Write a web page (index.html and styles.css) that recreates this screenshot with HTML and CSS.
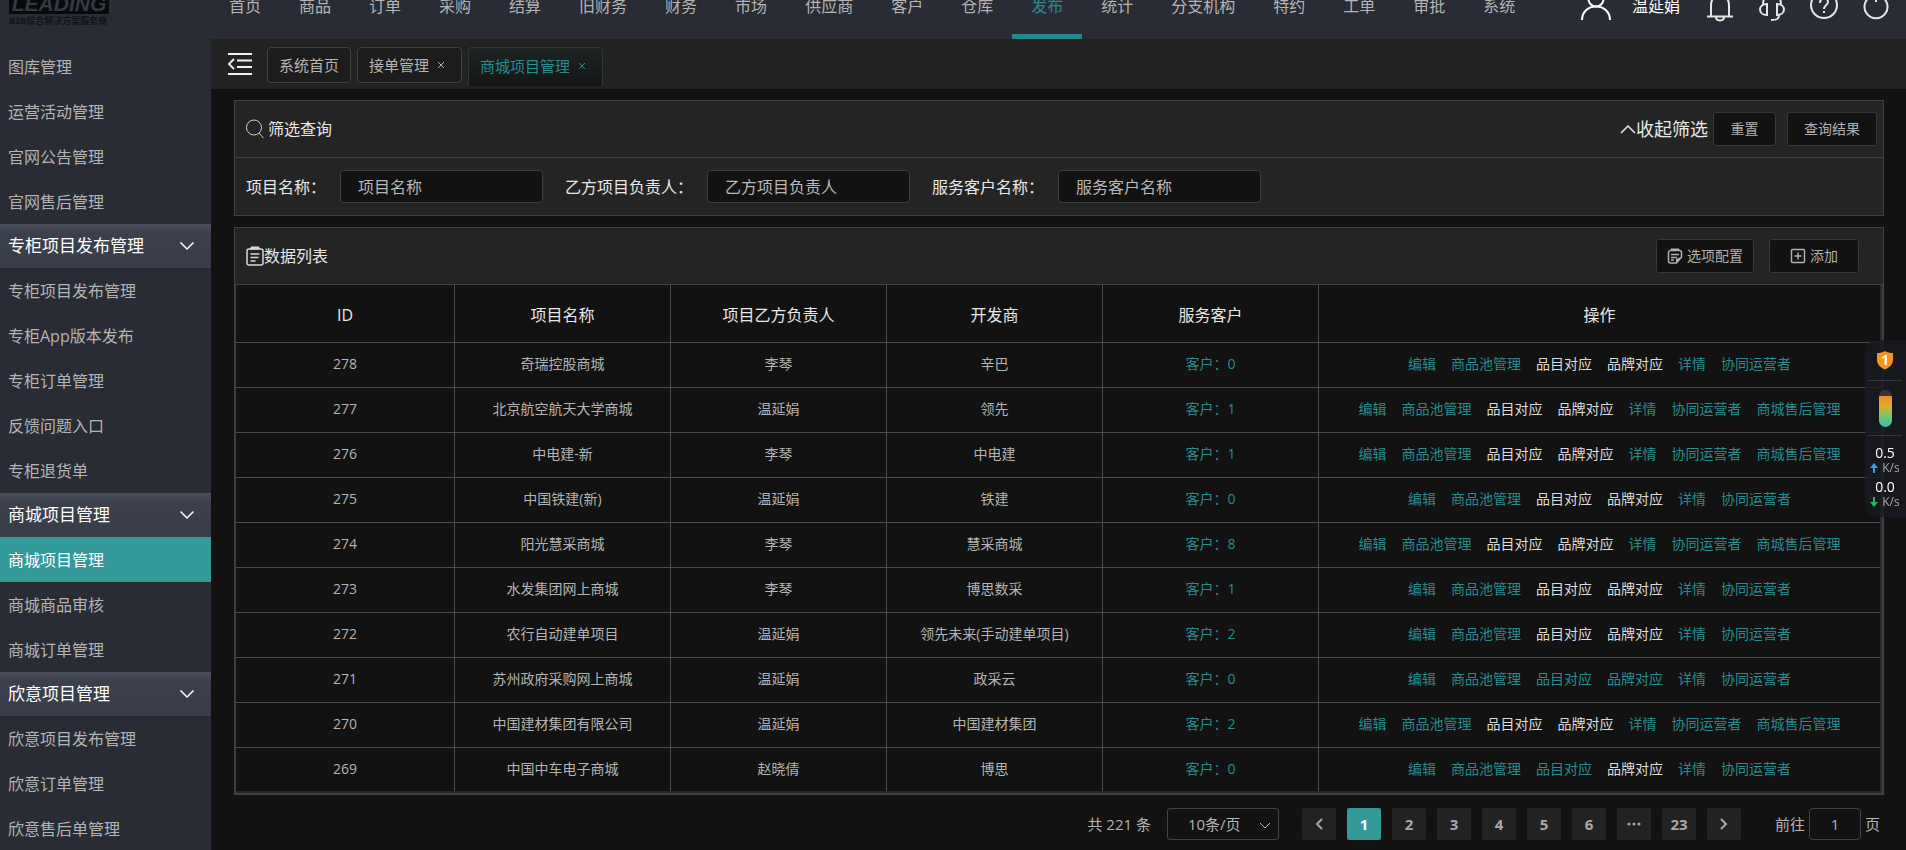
FILE: index.html
```html
<!DOCTYPE html>
<html lang="zh-CN">
<head>
<meta charset="utf-8">
<title>商城项目管理</title>
<link rel="stylesheet" href="styles.css">
</head>
<body>
<header class="topbar">
  <div class="topbar-inner">
    <div class="logo">
      <span class="logo-mark">LEADING</span>
      <span class="logo-sub">B2B综合解决方案服务商</span>
    </div>
    <nav class="topnav">
      <a href="#">首页</a><a href="#">商品</a><a href="#">订单</a><a href="#">采购</a><a href="#">结算</a><a href="#">旧财务</a><a href="#">财务</a><a href="#">市场</a><a href="#">供应商</a><a href="#">客户</a><a href="#">仓库</a><a href="#" class="is-active">发布</a><a href="#">统计</a><a href="#">分支机构</a><a href="#">特约</a><a href="#">工单</a><a href="#">审批</a><a href="#">系统</a>
    </nav>
    <div class="user">
      <svg class="user-avatar" width="32" height="32" viewBox="0 0 32 32"><circle cx="16" cy="9" r="7.500"/><path d="M2 30c0-8 6-13.500 14-13.500s14 5.500 14 13.500"/></svg>
      <span class="user-name">温延娟</span>
      <button class="icon-btn" aria-label="通知"><svg width="28" height="32" viewBox="0 0 28 32"><path d="M14 2v3M5 26V15c0-6 4-10 9-10s9 4 9 10v11M1 26.500h26M10 27c0 4.500 8 4.500 8 0"/></svg></button>
      <button class="icon-btn" aria-label="客服"><svg width="28" height="32" viewBox="0 0 28 32"><path d="M5 15C5 7 9 4 14 4s9 3 9 11M9 14v11c-4 0-7-2-7-5.500S5 14 9 14zM19 14v11c4 0 7-2 7-5.500S23 14 19 14zM21 25c0 4-2 5-8 5"/></svg></button>
      <button class="icon-btn" aria-label="帮助"><svg width="28" height="32" viewBox="0 0 28 32"><circle cx="14" cy="15" r="13"/><path d="M10 13c0-6 8-6 8-1 0 3-4 3-4 7M14 21v2"/></svg></button>
      <button class="icon-btn" aria-label="退出"><svg width="28" height="32" viewBox="0 0 28 32"><path d="M10 6a11.500 11.500 0 1 0 8 0M14 2v10"/></svg></button>
    </div>
  </div>
</header>

<div class="layout">
  <aside class="sidebar">
    <a href="#">图库管理</a>
    <a href="#">运营活动管理</a>
    <a href="#">官网公告管理</a>
    <a href="#">官网售后管理</a>
    <button class="side-group">专柜项目发布管理<svg width="16" height="10" viewBox="0 0 16 10"><path d="M1.500 1.500 8 8l6.500-6.500"/></svg></button>
    <a href="#">专柜项目发布管理</a>
    <a href="#">专柜App版本发布</a>
    <a href="#">专柜订单管理</a>
    <a href="#">反馈问题入口</a>
    <a href="#">专柜退货单</a>
    <button class="side-group">商城项目管理<svg width="16" height="10" viewBox="0 0 16 10"><path d="M1.500 1.500 8 8l6.500-6.500"/></svg></button>
    <a href="#" class="is-active">商城项目管理</a>
    <a href="#">商城商品审核</a>
    <a href="#">商城订单管理</a>
    <button class="side-group">欣意项目管理<svg width="16" height="10" viewBox="0 0 16 10"><path d="M1.500 1.500 8 8l6.500-6.500"/></svg></button>
    <a href="#">欣意项目发布管理</a>
    <a href="#">欣意订单管理</a>
    <a href="#">欣意售后单管理</a>
  </aside>

  <div class="content">
    <div class="tabs">
      <button class="collapse" aria-label="收起菜单"><svg width="24" height="22" viewBox="0 0 24 22"><path d="M0 1h24M9 7.500h15M9 14h15M0 21h24M6 6l-5 5 5 5"/></svg></button>
      <div class="tab">系统首页</div>
      <div class="tab">接单管理<button class="tab-close" aria-label="关闭"><svg width="8" height="8" viewBox="0 0 8 8"><path d="m1 1 6 6M7 1 1 7"/></svg></button></div>
      <div class="tab is-active">商城项目管理<button class="tab-close" aria-label="关闭"><svg width="8" height="8" viewBox="0 0 8 8"><path d="m1 1 6 6M7 1 1 7"/></svg></button></div>
    </div>

    <main class="main">
      <section class="panel">
        <div class="panel-head">
          <svg class="search-icon" width="18" height="20" viewBox="0 0 18 20"><circle cx="8" cy="8.500" r="7.500"/><path d="m13 14 4.500 5"/></svg>
          <h2>筛选查询</h2>
          <div class="filter-actions">
            <button class="fold"><svg width="16" height="10" viewBox="0 0 16 10"><path d="m1 9 7-7 7 7"/></svg>收起筛选</button>
            <button class="btn btn-short">重置</button>
            <button class="btn">查询结果</button>
          </div>
        </div>
        <form class="filters">
          <label for="f-name">项目名称：</label><input id="f-name" type="text" placeholder="项目名称">
          <label for="f-owner">乙方项目负责人：</label><input id="f-owner" type="text" placeholder="乙方项目负责人">
          <label for="f-client">服务客户名称：</label><input id="f-client" type="text" placeholder="服务客户名称">
        </form>
      </section>

      <section class="panel">
        <div class="panel-head">
          <svg class="list-icon" width="18" height="20" viewBox="0 0 18 20"><rect x="1" y="3" width="16" height="16" rx="2"/><path d="M4.500 8h9M4.500 11.500h8M4.500 15h5"/><path class="clip" d="M5 .5h8l1 3H4z"/></svg>
          <h2>数据列表</h2>
          <div class="list-actions">
            <button class="btn"><svg width="16" height="16" viewBox="0 0 16 16"><path d="M9.500 15H3.500a2 2 0 0 1-2-2V4.500a2 2 0 0 1 2-2h9a2 2 0 0 1 2 2V9zM4 6.500h8M4 9.500h6M4 12h3"/><path class="clip" d="M4 .5h8l1 2.500H3zM9 15v-4l5.500-2z"/></svg>选项配置</button>
            <button class="btn"><svg width="16" height="16" viewBox="0 0 16 16"><rect x="1.500" y="1.500" width="13" height="13" rx="1"/><path d="M4.500 8h7M8 4.500v7"/></svg>添加</button>
          </div>
        </div>
        <div class="table-wrap">
        <table class="grid">
          <colgroup><col class="c-id"><col class="c-mid"><col class="c-mid"><col class="c-mid"><col class="c-mid"><col></colgroup>
          <thead><tr><th>ID</th><th>项目名称</th><th>项目乙方负责人</th><th>开发商</th><th>服务客户</th><th>操作</th></tr></thead>
          <tbody>
            <tr><td>278</td><td>奇瑞控股商城</td><td>李琴</td><td>辛巴</td><td><a href="#">客户：0</a></td><td><div class="ops"><a href="#">编辑</a><a href="#">商品池管理</a><a href="#" class="lit">品目对应</a><a href="#" class="lit">品牌对应</a><a href="#">详情</a><a href="#">协同运营者</a></div></td></tr>
            <tr><td>277</td><td>北京航空航天大学商城</td><td>温延娟</td><td>领先</td><td><a href="#">客户：1</a></td><td><div class="ops"><a href="#">编辑</a><a href="#">商品池管理</a><a href="#" class="lit">品目对应</a><a href="#" class="lit">品牌对应</a><a href="#">详情</a><a href="#">协同运营者</a><a href="#">商城售后管理</a></div></td></tr>
            <tr><td>276</td><td>中电建-新</td><td>李琴</td><td>中电建</td><td><a href="#">客户：1</a></td><td><div class="ops"><a href="#">编辑</a><a href="#">商品池管理</a><a href="#" class="lit">品目对应</a><a href="#" class="lit">品牌对应</a><a href="#">详情</a><a href="#">协同运营者</a><a href="#">商城售后管理</a></div></td></tr>
            <tr><td>275</td><td>中国铁建(新)</td><td>温延娟</td><td>铁建</td><td><a href="#">客户：0</a></td><td><div class="ops"><a href="#">编辑</a><a href="#">商品池管理</a><a href="#" class="lit">品目对应</a><a href="#" class="lit">品牌对应</a><a href="#">详情</a><a href="#">协同运营者</a></div></td></tr>
            <tr><td>274</td><td>阳光慧采商城</td><td>李琴</td><td>慧采商城</td><td><a href="#">客户：8</a></td><td><div class="ops"><a href="#">编辑</a><a href="#">商品池管理</a><a href="#" class="lit">品目对应</a><a href="#" class="lit">品牌对应</a><a href="#">详情</a><a href="#">协同运营者</a><a href="#">商城售后管理</a></div></td></tr>
            <tr><td>273</td><td>水发集团网上商城</td><td>李琴</td><td>博思数采</td><td><a href="#">客户：1</a></td><td><div class="ops"><a href="#">编辑</a><a href="#">商品池管理</a><a href="#" class="lit">品目对应</a><a href="#" class="lit">品牌对应</a><a href="#">详情</a><a href="#">协同运营者</a></div></td></tr>
            <tr><td>272</td><td>农行自动建单项目</td><td>温延娟</td><td>领先未来(手动建单项目)</td><td><a href="#">客户：2</a></td><td><div class="ops"><a href="#">编辑</a><a href="#">商品池管理</a><a href="#" class="lit">品目对应</a><a href="#" class="lit">品牌对应</a><a href="#">详情</a><a href="#">协同运营者</a></div></td></tr>
            <tr><td>271</td><td>苏州政府采购网上商城</td><td>温延娟</td><td>政采云</td><td><a href="#">客户：0</a></td><td><div class="ops"><a href="#">编辑</a><a href="#">商品池管理</a><a href="#">品目对应</a><a href="#">品牌对应</a><a href="#">详情</a><a href="#">协同运营者</a></div></td></tr>
            <tr><td>270</td><td>中国建材集团有限公司</td><td>温延娟</td><td>中国建材集团</td><td><a href="#">客户：2</a></td><td><div class="ops"><a href="#">编辑</a><a href="#">商品池管理</a><a href="#" class="lit">品目对应</a><a href="#" class="lit">品牌对应</a><a href="#">详情</a><a href="#">协同运营者</a><a href="#">商城售后管理</a></div></td></tr>
            <tr><td>269</td><td>中国中车电子商城</td><td>赵晓倩</td><td>博思</td><td><a href="#">客户：0</a></td><td><div class="ops"><a href="#">编辑</a><a href="#">商品池管理</a><a href="#">品目对应</a><a href="#" class="lit">品牌对应</a><a href="#">详情</a><a href="#">协同运营者</a></div></td></tr>
          </tbody>
        </table>
        </div>
      </section>

      <div class="pager">
        <span class="pager-total">共 221 条</span>
        <div class="pager-size">
          <select aria-label="每页条数"><option>10条/页</option><option>20条/页</option></select>
          <svg width="12" height="8" viewBox="0 0 12 8"><path d="m1 1 5 5 5-5"/></svg>
        </div>
        <div class="pager-list">
          <button aria-label="上一页"><svg width="8" height="12" viewBox="0 0 8 12"><path d="M7 1 2 6l5 5"/></svg></button>
          <button class="is-active">1</button><button>2</button><button>3</button><button>4</button><button>5</button><button>6</button>
          <button aria-label="更多"><svg class="dots" width="14" height="4" viewBox="0 0 14 4"><circle cx="2" cy="2" r="1.500"/><circle cx="7" cy="2" r="1.500"/><circle cx="12" cy="2" r="1.500"/></svg></button>
          <button>23</button>
          <button aria-label="下一页"><svg width="8" height="12" viewBox="0 0 8 12"><path d="m1 1 5 5-5 5"/></svg></button>
        </div>
        <div class="pager-jump"><label for="jump">前往</label><input id="jump" type="text" value="1"><span>页</span></div>
      </div>
    </main>
  </div>
</div>

<aside class="monitor">
  <div class="monitor-shield">
    <svg width="18" height="20" viewBox="0 0 18 20"><path d="M9 1c2.500 1.500 5 2 8 2v7c0 4.500-3.500 7.500-8 9.500C4.500 17.500 1 14.500 1 10V3c3 0 5.500-.500 8-2z"/></svg>
    <span>1</span>
  </div>
  <div class="monitor-mem"><div class="capsule"></div></div>
  <div class="monitor-net">
    <b>0.5</b>
    <span><svg class="up" width="8" height="10" viewBox="0 0 8 10"><path d="M4 0 8 5H5v5H3V5H0z"/></svg>K/s</span>
    <b>0.0</b>
    <span><svg class="down" width="8" height="10" viewBox="0 0 8 10"><path d="M4 10 8 5H5V0H3v5H0z"/></svg>K/s</span>
  </div>
</aside>
</body>
</html>
```

FILE: styles.css
```css
* { box-sizing: border-box; }

body {
  margin: 0;
  height: 100vh;
  overflow: hidden;
  display: flex;
  flex-direction: column;
  background: #121212;
  color: #b4b4b4;
  font-family: "Open Sans", "Noto Sans CJK SC", sans-serif;
  font-size: 16px;
  line-height: 24px;
}

a { color: inherit; text-decoration: none; }
button, input, select { font: inherit; color: inherit; }
button { margin: 0; padding: 0; border: 0; background: none; cursor: pointer; }
svg { display: block; flex: none; fill: none; stroke: currentColor; }
h2 { margin: 0; font-size: 16px; font-weight: 400; color: #e8e8e8; }

/* top bar */
.topbar { flex: none; height: 39px; overflow: hidden; background: #292c35; }
.topbar-inner { display: flex; height: 67px; margin-top: -28px; }
.logo { width: 210px; padding: 20px 0 0 9px; display: flex; flex-direction: column; flex: none; }
.logo-mark {
  width: 100px; height: 22px;
  background: #08090b; color: #363943;
  font: italic 700 21px/24px "Liberation Sans", sans-serif;
  text-align: center;
  overflow: hidden;
}
.logo-sub { font-size: 9px; line-height: 14px; font-weight: 700; color: #111318; white-space: nowrap; }
.topnav { display: flex; }
.topnav a { display: flex; align-items: center; padding: 5px 19px 0; white-space: nowrap; border-bottom: 5px solid transparent; }
.topnav .is-active { color: #298b8d; border-color: #24898c; }
.user { margin-left: auto; display: flex; align-items: center; gap: 24px; padding-right: 16px; color: #ffffff; }
.user svg { stroke-width: 2; }
.user-name { margin: 0 2px 0 -4px; white-space: nowrap; }
.icon-btn { color: #e6e6e6; }

/* side menu */
.layout { flex: 1; min-height: 0; display: flex; }
.sidebar { flex: none; width: 211px; padding-top: 5px; overflow: hidden; background: #292c35; display: flex; flex-direction: column; }
.sidebar a { flex: none; height: 45px; padding: 0 8px; line-height: 46px; }
.sidebar .is-active { background: #339999; color: #ffffff; }
.side-group {
  flex: none; height: 44px; padding: 0 16px 0 8px;
  display: flex; align-items: center; justify-content: space-between;
  font-size: 17px; color: #ffffff;
  background: linear-gradient(#4c505d 0, #3c404d 9px, #393c49 100%);
}
.side-group svg { stroke-width: 1.5; }

/* tabs */
.content { flex: 1; min-width: 0; display: flex; flex-direction: column; }
.tabs { height: 50px; padding: 8px 17px 0; display: flex; gap: 6px; align-items: flex-start; background: #222222; font-size: 15px; }
.collapse { margin: 6px 9px 0 0; color: #f0f0f0; }
.collapse svg { stroke-width: 2; }
.tab { height: 36px; padding: 0 11px; display: flex; align-items: center; border: 1px solid #404040; border-radius: 4px; background: #1c1c1c; }
.tab.is-active { height: 39px; padding-bottom: 2px; border-color: #2d3836; border-bottom: 0; border-radius: 4px 4px 0 0; background: linear-gradient(#1d2423, #121515); color: #298b8d; }
.tab-close { margin: 0 5px 0 8px; }

/* panels */
.main { padding: 11px 22px 0 23px; display: flex; flex-direction: column; gap: 11px; }
.panel { border: 1px solid #414141; background: #242424; }
.panel-head { height: 57px; padding-left: 11px; display: flex; align-items: center; border-bottom: 1px solid #414141; }
.search-icon { margin-right: 4px; color: #d0d0d0; }
.list-icon { color: #d8d8d8; stroke-width: 1.5; }
.clip { fill: currentColor; stroke: none; }
.filter-actions, .list-actions { margin-left: auto; display: flex; align-items: center; }
.filter-actions { gap: 11px; padding-right: 6px; }
.list-actions { gap: 15px; padding-right: 24px; }
.fold { display: flex; align-items: center; margin-right: -6px; font-size: 18px; color: #e8e8e8; white-space: nowrap; }
.fold svg { stroke-width: 1.5; }
.btn { height: 34px; min-width: 90px; padding: 0 10px; display: flex; align-items: center; justify-content: center; gap: 4px; border: 1px solid #363838; border-radius: 3px; background: #121212; font-size: 14px; color: #b0b0b0; white-space: nowrap; }
.btn svg { stroke-width: 1.5; }
.btn-short { min-width: 63px; }
.filters { height: 57px; padding-left: 11px; display: flex; align-items: center; }
.filters label { margin-right: 14px; color: #e8e8e8; white-space: nowrap; }
.filters input { width: 203px; height: 33px; margin-right: 22px; padding: 0 17px; border: 1px solid #3d3d3d; border-radius: 4px; background: #121212; outline: 0; }
.filters input::placeholder { color: #b8b8b8; opacity: 1; }

/* table */
.table-wrap { padding: 0 2px 2px 0; border: solid #3e3f43; border-width: 0 1px 1px 1px; background: #28292c; }
.grid { width: 100%; table-layout: fixed; border-collapse: separate; border-spacing: 0; background: #121212; }
.c-id { width: 219px; }
.c-mid { width: 216px; }
.grid th, .grid td { padding: 0 0 2px; text-align: center; border: solid #4a4a4c; border-width: 0 1px 1px 0; }
.grid th { height: 58px; padding: 2px 0 0; font-weight: 400; color: #e8e8e8; }
.grid td { height: 45px; font-size: 14px; }
.grid tr > :last-child { border-right: 0; }
.grid tbody tr:last-child td { height: 43px; border-bottom: 0; }
.grid td a { color: #298b8d; white-space: nowrap; }
.grid td a.lit { color: #dcdcdc; }
.ops { display: flex; justify-content: center; gap: 15px; }

/* pagination */
.pager { display: flex; align-items: center; justify-content: flex-end; padding: 2px 4px 0 0; font-size: 15px; }
.pager-total { margin-right: 16px; }
.pager-size { position: relative; margin-right: 23px; }
.pager-size select { display: block; appearance: none; width: 112px; height: 32px; padding: 0 20px; border: 1px solid #424242; border-radius: 3px; background: #121212; }
.pager-size svg { position: absolute; right: 8px; top: 14px; pointer-events: none; }
.pager-list { display: flex; gap: 11px; margin-right: 34px; }
.pager-list button { width: 34px; height: 32px; display: flex; align-items: center; justify-content: center; border-radius: 2px; background: #222222; font-weight: 700; color: #a8a8a8; }
.pager-list .is-active { background: #339999; color: #ffffff; }
.pager-list svg { stroke-width: 2; }
.pager-list .dots { fill: currentColor; stroke: none; }
.pager-jump { display: flex; align-items: center; gap: 4px; }
.pager-jump input { width: 52px; height: 32px; padding: 0; text-align: center; border: 1px solid #424242; border-radius: 4px; background: #121212; }

/* floating system monitor */
.monitor { position: fixed; right: 0; top: 340px; width: 41px; padding-left: 3px; border-radius: 12px 0 0 12px; background: rgba(24, 26, 32, 0.85); color: #ffffff; }
.monitor-shield { position: relative; height: 41px; margin-right: 4px; display: grid; place-items: center; border-bottom: 1px solid #34363d; }
.monitor-shield svg { fill: #f7931e; stroke: none; }
.monitor-shield span { position: absolute; font-size: 14px; font-weight: 700; line-height: 16px; }
.monitor-mem { height: 55px; margin-right: 4px; display: grid; place-items: center; border-bottom: 1px solid #34363d; }
.capsule { width: 13px; height: 37px; border-radius: 7px; background: linear-gradient(#34363b 0 6px, #ee8b2e 6px, #dcae2a 16px, #7cc765 26px, #35bfae); }
.monitor-net { height: 81px; padding: 8px 4px 0 0; display: flex; flex-direction: column; align-items: center; }
.monitor-net b { font-size: 14px; font-weight: 400; line-height: 18px; }
.monitor-net span { display: flex; align-items: center; gap: 4px; font-size: 12px; line-height: 12px; height: 12px; margin-bottom: 4px; color: #a8a8a8; }
.monitor-net svg { stroke: none; }
.up { fill: #2aa3ef; }
.down { fill: #1fb866; }
```
